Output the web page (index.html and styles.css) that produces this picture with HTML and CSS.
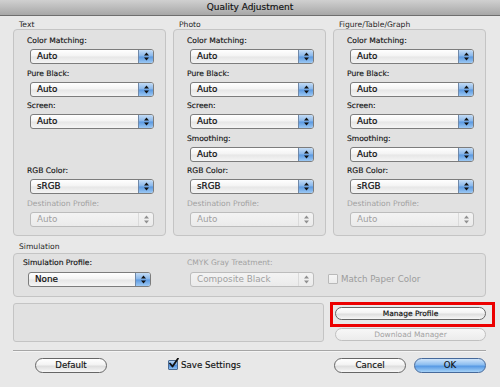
FILE: index.html
```html
<!DOCTYPE html>
<html>
<head>
<meta charset="utf-8">
<link rel="stylesheet" href="styles.css">
</head>
<body>
<div class="titlebar">Quality Adjustment</div>
<div class="content">
  <div class="groups">
    <div class="group">
      <div class="heading">Text</div>
      <div class="box col-box">
        <div class="field"><div class="label">Color Matching:</div><div class="select"><span class="val">Auto</span><span class="arr"><svg width="5" height="9" viewBox="0 0 5 9"><path d="M2.5 0.5L5 3.5H0Z M2.5 8.5L5 5.5H0Z"/></svg></span></div></div>
        <div class="field"><div class="label">Pure Black:</div><div class="select"><span class="val">Auto</span><span class="arr"><svg width="5" height="9" viewBox="0 0 5 9"><path d="M2.5 0.5L5 3.5H0Z M2.5 8.5L5 5.5H0Z"/></svg></span></div></div>
        <div class="field"><div class="label">Screen:</div><div class="select"><span class="val">Auto</span><span class="arr"><svg width="5" height="9" viewBox="0 0 5 9"><path d="M2.5 0.5L5 3.5H0Z M2.5 8.5L5 5.5H0Z"/></svg></span></div></div>
        <div class="field"></div>
        <div class="field"><div class="label">RGB Color:</div><div class="select"><span class="val">sRGB</span><span class="arr"><svg width="5" height="9" viewBox="0 0 5 9"><path d="M2.5 0.5L5 3.5H0Z M2.5 8.5L5 5.5H0Z"/></svg></span></div></div>
        <div class="field"><div class="label dim">Destination Profile:</div><div class="select dis"><span class="val">Auto</span><span class="arr"><svg width="5" height="9" viewBox="0 0 5 9"><path d="M2.5 0.5L5 3.5H0Z M2.5 8.5L5 5.5H0Z"/></svg></span></div></div>
      </div>
    </div>
    <div class="group">
      <div class="heading">Photo</div>
      <div class="box col-box">
        <div class="field"><div class="label">Color Matching:</div><div class="select"><span class="val">Auto</span><span class="arr"><svg width="5" height="9" viewBox="0 0 5 9"><path d="M2.5 0.5L5 3.5H0Z M2.5 8.5L5 5.5H0Z"/></svg></span></div></div>
        <div class="field"><div class="label">Pure Black:</div><div class="select"><span class="val">Auto</span><span class="arr"><svg width="5" height="9" viewBox="0 0 5 9"><path d="M2.5 0.5L5 3.5H0Z M2.5 8.5L5 5.5H0Z"/></svg></span></div></div>
        <div class="field"><div class="label">Screen:</div><div class="select"><span class="val">Auto</span><span class="arr"><svg width="5" height="9" viewBox="0 0 5 9"><path d="M2.5 0.5L5 3.5H0Z M2.5 8.5L5 5.5H0Z"/></svg></span></div></div>
        <div class="field"><div class="label">Smoothing:</div><div class="select"><span class="val">Auto</span><span class="arr"><svg width="5" height="9" viewBox="0 0 5 9"><path d="M2.5 0.5L5 3.5H0Z M2.5 8.5L5 5.5H0Z"/></svg></span></div></div>
        <div class="field"><div class="label">RGB Color:</div><div class="select"><span class="val">sRGB</span><span class="arr"><svg width="5" height="9" viewBox="0 0 5 9"><path d="M2.5 0.5L5 3.5H0Z M2.5 8.5L5 5.5H0Z"/></svg></span></div></div>
        <div class="field"><div class="label dim">Destination Profile:</div><div class="select dis"><span class="val">Auto</span><span class="arr"><svg width="5" height="9" viewBox="0 0 5 9"><path d="M2.5 0.5L5 3.5H0Z M2.5 8.5L5 5.5H0Z"/></svg></span></div></div>
      </div>
    </div>
    <div class="group">
      <div class="heading">Figure/Table/Graph</div>
      <div class="box col-box">
        <div class="field"><div class="label">Color Matching:</div><div class="select"><span class="val">Auto</span><span class="arr"><svg width="5" height="9" viewBox="0 0 5 9"><path d="M2.5 0.5L5 3.5H0Z M2.5 8.5L5 5.5H0Z"/></svg></span></div></div>
        <div class="field"><div class="label">Pure Black:</div><div class="select"><span class="val">Auto</span><span class="arr"><svg width="5" height="9" viewBox="0 0 5 9"><path d="M2.5 0.5L5 3.5H0Z M2.5 8.5L5 5.5H0Z"/></svg></span></div></div>
        <div class="field"><div class="label">Screen:</div><div class="select"><span class="val">Auto</span><span class="arr"><svg width="5" height="9" viewBox="0 0 5 9"><path d="M2.5 0.5L5 3.5H0Z M2.5 8.5L5 5.5H0Z"/></svg></span></div></div>
        <div class="field"><div class="label">Smoothing:</div><div class="select"><span class="val">Auto</span><span class="arr"><svg width="5" height="9" viewBox="0 0 5 9"><path d="M2.5 0.5L5 3.5H0Z M2.5 8.5L5 5.5H0Z"/></svg></span></div></div>
        <div class="field"><div class="label">RGB Color:</div><div class="select"><span class="val">sRGB</span><span class="arr"><svg width="5" height="9" viewBox="0 0 5 9"><path d="M2.5 0.5L5 3.5H0Z M2.5 8.5L5 5.5H0Z"/></svg></span></div></div>
        <div class="field"><div class="label dim">Destination Profile:</div><div class="select dis"><span class="val">Auto</span><span class="arr"><svg width="5" height="9" viewBox="0 0 5 9"><path d="M2.5 0.5L5 3.5H0Z M2.5 8.5L5 5.5H0Z"/></svg></span></div></div>
      </div>
    </div>
  </div>

  <div class="heading sim-heading">Simulation</div>
  <div class="box sim-box">
    <div class="sim-cell c1">
      <div class="label">Simulation Profile:</div>
      <div class="select"><span class="val">None</span><span class="arr"><svg width="5" height="9" viewBox="0 0 5 9"><path d="M2.5 0.5L5 3.5H0Z M2.5 8.5L5 5.5H0Z"/></svg></span></div>
    </div>
    <div class="sim-cell c2">
      <div class="label dim">CMYK Gray Treatment:</div>
      <div class="select dis"><span class="val">Composite Black</span><span class="arr"><svg width="5" height="9" viewBox="0 0 5 9"><path d="M2.5 0.5L5 3.5H0Z M2.5 8.5L5 5.5H0Z"/></svg></span></div>
    </div>
    <div class="sim-cell c3">
      <label class="check dim-check"><span class="cb"></span><span>Match Paper Color</span></label>
    </div>
  </div>

  <div class="lower">
    <div class="box empty-box"></div>
    <div class="side-btns">
      <div class="btn small">Manage Profile</div>
      <div class="btn small dis">Download Manager</div>
    </div>
  </div>

  <div class="separator"></div>

  <div class="footer">
    <div class="btn wide">Default</div>
    <label class="check save"><span class="cb on"><svg width="11" height="11" viewBox="0 0 11 11"><path d="M2 5.5L4.5 8.5L10 0.5" fill="none" stroke="#111" stroke-width="1.8" stroke-linecap="round" stroke-linejoin="round"/></svg></span><span>Save Settings</span></label>
    <div class="btn wide cancel">Cancel</div>
    <div class="btn wide ok">OK</div>
  </div>
</div>
<div class="highlight"></div>
</body>
</html>
```

FILE: styles.css
```css
* { box-sizing: border-box; }
html, body { margin: 0; padding: 0; }
body {
  width: 500px;
  height: 387px;
  background: #e8e8e8;
  font-family: "DejaVu Sans", "Liberation Sans", sans-serif;
  color: #1c1c1c;
  position: relative;
  overflow: hidden;
}
.titlebar {
  height: 16px;
  background: linear-gradient(#d0d0d0, #a7a7a7);
  border-bottom: 1px solid #6e6e6e;
  text-align: center;
  font-size: 9px;
  line-height: 15px;
  color: #111;
  -webkit-text-stroke: 0.15px #111;
}
.content { padding: 0 14px 0 13px; }
.groups {
  display: grid;
  grid-template-columns: 153px 153px 153px;
  column-gap: 7px;
}
.heading {
  font-size: 7.6px;
  line-height: 9px;
  height: 13px;
  padding: 4px 0 0 6px;
  color: #262626;
}
.box {
  background: #e1e1e1;
  border: 1px solid #c4c4c4;
  border-radius: 4px;
}
.col-box {
  height: 207px;
  padding: 6px 12px 0 13px;
}
.field { height: 32.6px; }
.label {
  font-size: 7.6px;
  line-height: 10px;
  height: 10px;
  margin-bottom: 3px;
  color: #151515;
  white-space: nowrap;
  -webkit-text-stroke: 0.15px #151515;
}
.label.dim { color: #a2a2a2; -webkit-text-stroke: 0; }
.select {
  display: flex;
  margin-left: 3px;
  width: 124px;
  height: 15px;
  border: 1px solid #7c7c7c;
  border-radius: 3px;
  background: linear-gradient(#ffffff, #f3f3f3 48%, #e6e6e6 52%, #f5f5f5);
  overflow: hidden;
}
.select .val {
  flex: 1;
  font-size: 8.8px;
  line-height: 13px;
  padding-left: 6px;
  color: #0d0d0d;
  white-space: nowrap;
  -webkit-text-stroke: 0.2px #0d0d0d;
}
.select .arr {
  width: 15px;
  display: flex;
  align-items: center;
  justify-content: center;
  border-left: 1px solid #6f88a8;
  background: linear-gradient(#c4dcf5, #86b5ea 48%, #5a98e0 52%, #9cc8f3);
}
.select .arr svg { fill: #111; display: block; }
.select.dis {
  border-color: #bcbcbc;
  background: linear-gradient(#f3f3f3, #ebebeb);
}
.select.dis .val { color: #a0a0a0; -webkit-text-stroke: 0; }
.select.dis .arr {
  background: transparent;
  border-left: 1px solid #dadada;
}
.select.dis .arr svg { fill: #909090; }

.sim-heading { height: 17px; padding-top: 6px; }
.sim-box {
  height: 44px;
  display: flex;
  padding: 4px 0 0 9px;
}
.sim-cell .label { margin-bottom: 4px; }
.sim-cell.c1 { width: 164px; }
.sim-cell.c1 .select { margin-left: 5px; width: 123px; height: 15px; }
.sim-cell.c2 { width: 141px; }
.sim-cell.c2 .select { margin-left: 3px; width: 124px; }
.sim-cell.c3 { padding-top: 15px; }

.check {
  display: flex;
  align-items: center;
  gap: 3px;
  font-size: 8.7px;
  line-height: 12px;
  color: #111;
  white-space: nowrap;
}
.save span:last-child { -webkit-text-stroke: 0.15px #111; }
.cb {
  width: 10px;
  height: 10px;
  border: 1px solid #7a7a7a;
  border-radius: 1px;
  background: linear-gradient(#ffffff, #e6e6e6);
  position: relative;
  flex: none;
}
.dim-check { color: #9c9c9c; }
.dim-check .cb { border-color: #b9b9b9; background: linear-gradient(#f5f5f5, #ececec); }
.cb.on {
  border-color: #4a6a92;
  background: linear-gradient(#b9d5f3, #6fa6e6 50%, #4c8ddd 52%, #8ec0f2);
}
.cb.on svg { position: absolute; left: -1px; top: -3px; }

.lower {
  display: flex;
  margin-top: 6px;
  height: 39px;
}
.empty-box { width: 311px; height: 39px; border-radius: 3px; }
.side-btns {
  margin-left: 11px;
  width: 151px;
  padding-top: 4px;
  display: flex;
  flex-direction: column;
  gap: 8px;
}
.btn {
  height: 15px;
  border: 1px solid #666;
  border-radius: 8px;
  background: linear-gradient(#ffffff, #f3f3f3 45%, #dedede 55%, #f7f7f7);
  font-size: 8.6px;
  line-height: 13px;
  text-align: center;
  color: #111;
  white-space: nowrap;
  -webkit-text-stroke: 0.15px #111;
}
.btn.small {
  height: 13px;
  font-size: 7.5px;
  line-height: 11px;
  border-radius: 7px;
}
.btn.dis {
  border-color: #c0c0c0;
  color: #a3a3a3;
  background: linear-gradient(#f7f7f7, #ececec);
  -webkit-text-stroke: 0;
}
.separator {
  margin-top: 8px;
  height: 1px;
  background: #a6a6a6;
  box-shadow: 0 1px 0 #f4f4f4;
}
.footer {
  display: flex;
  align-items: center;
  margin-top: 7px;
  padding-left: 22px;
}
.btn.wide { width: 72px; }
.save { margin-left: 61px; margin-top: -2px; }
.cancel { margin-left: auto; }
.ok {
  margin-left: 8px;
  border-color: #46699a;
  background: linear-gradient(#cfe4fa, #8bbdf0 45%, #5799e4 55%, #a6d2f7);
}
.highlight {
  position: absolute;
  left: 330px;
  top: 302px;
  width: 165px;
  height: 25px;
  border: 3px solid #ec0000;
}
```
